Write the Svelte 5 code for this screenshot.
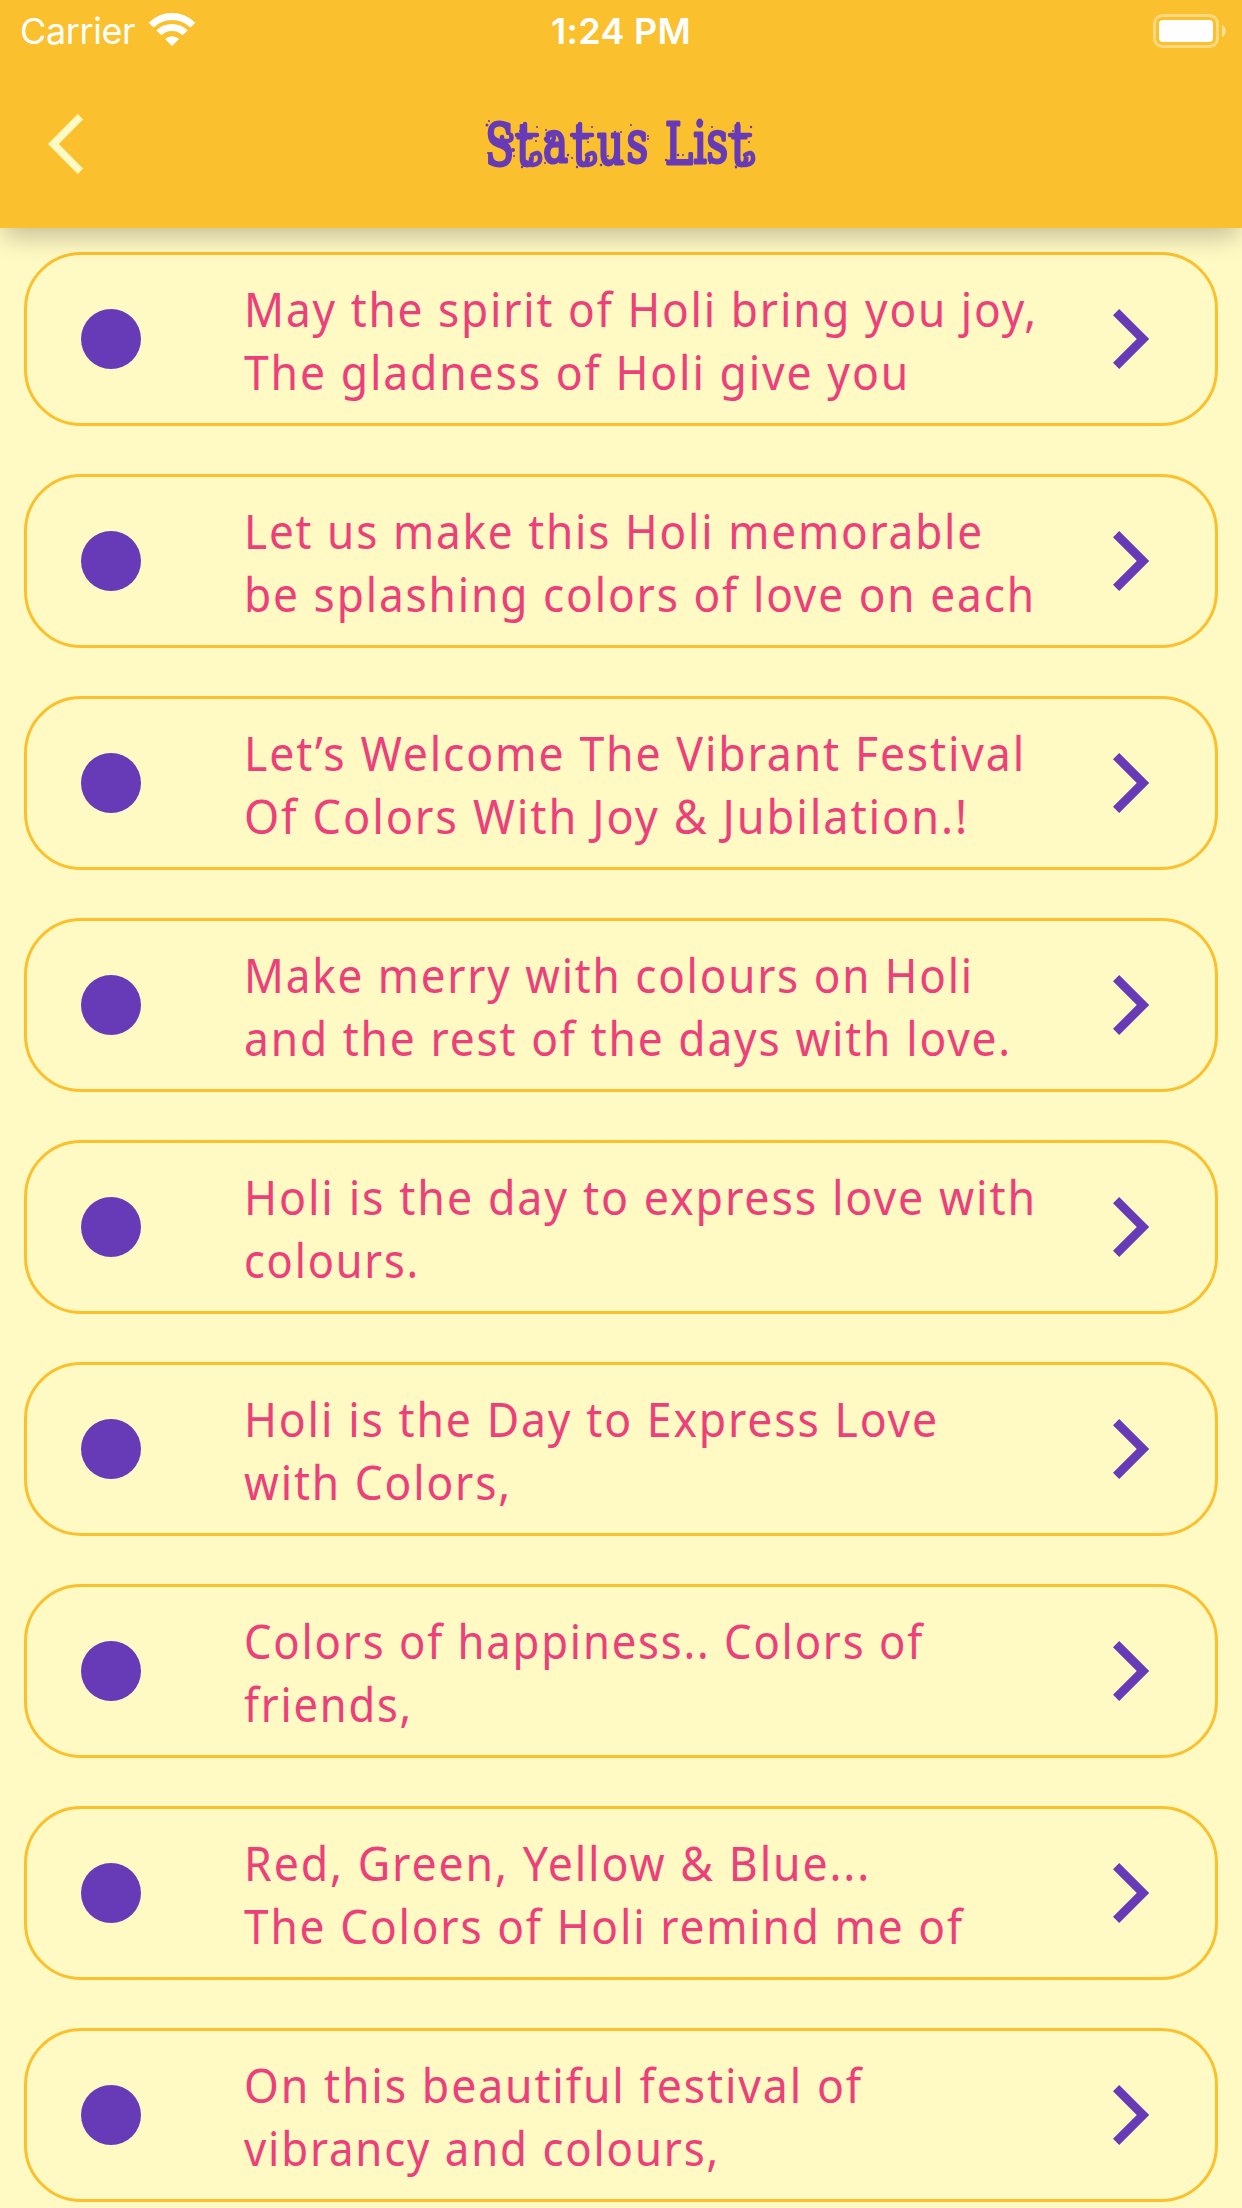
<script>
  // Each line carries the advance width it is fitted to.
  const statuses = [
    [['May the spirit of Holi bring you joy,', 794], ['The gladness of Holi give you', 666]],
    [['Let us make this Holi memorable', 740], ['be splashing colors of love on each', 792]],
    [['Let’s Welcome The Vibrant Festival', 782], ['Of Colors With Joy & Jubilation.!', 725]],
    [['Make merry with colours on Holi', 730], ['and the rest of the days with love.', 768]],
    [['Holi is the day to express love with', 793], ['colours.', 176]],
    [['Holi is the Day to Express Love', 695], ['with Colors,', 268]],
    [['Colors of happiness.. Colors of', 680], ['friends,', 169]],
    [['Red, Green, Yellow & Blue...', 627], ['The Colors of Holi remind me of', 720]],
    [['On this beautiful festival of', 619], ['vibrancy and colours,', 476]]
  ];

  const specks = [
    [1, 6, 1.5], [3, 2, 1], [2, 34, 1], [5, 39, 1], [27, 31, 2], [28, 37, 1], [34, 12, 1],
    [51, 8, 1], [50, 22, 1], [36, 48, 1.2], [60, 11, 1], [59, 44, 1], [82, 36, 1.2], [86, 39, 1],
    [106, 8, 1], [102, 23, 1], [91, 48, 1.2], [115, 46, 1.3], [122, 37, 1], [129, 13, 1.2],
    [135, 13, 1], [138, 45, 1], [145, 6, 1], [162, 17, 1], [162, 20, 1], [180, 41, 1.2],
    [192, 36, 1.3], [197, 36, 1], [216, 3, 1.3], [218, 43, 1], [224, 44, 1.2], [226, 8, 1],
    [247, 12, 1], [265, 8, 1.2], [263, 23, 1], [250, 48, 1.4]
  ];
  // Swirled foot, crossbar and raised stem of each t, then the curl on S and a.
  const curls = [
    'M40 43q1 3 7 3 8-1 7-8t-8-2M31 16h20M39 20V5', 'M95 43q1 3 7 3 8-1 7-8t-8-2M86 16h20M94 20V5',
    'M253 43q1 3 7 3 8-1 7-8t-8-2M244 16h20M252 20V5', 'M25 16q2 6-4 6t-5-4', 'M60 20a4 4 0 1 0 5-5'
  ];
</script>

<div class="screen">
  <header>
    <div class="statusbar">
      <div class="network">
        <span class="carrier">Carrier</span>
        <svg class="wifi" width="46" height="33" viewBox="0 0 46 33">
          <path d="M2.1 12.1a29.5 29.5 0 0 1 41.8 0M9.9 19.9a18.5 18.5 0 0 1 26.2 0" fill="none" stroke="#fff" stroke-width="7" />
          <path d="M23 33l-7-7a10 10 0 0 1 14 0z" fill="#fff" />
        </svg>
      </div>
      <span class="time">1:24 PM</span>
      <svg class="battery" width="74" height="34" viewBox="0 0 74 34">
        <rect x="1.5" y="1.5" width="63" height="31" rx="8" fill="none" stroke="#fff" stroke-opacity=".4" stroke-width="3" />
        <rect x="6" y="6" width="54" height="22" rx="4" fill="#fff" />
        <path d="M69 11c5 2 5 10 0 12z" fill="#fff" fill-opacity=".5" />
      </svg>
    </div>
    <div class="toolbar">
      <svg class="back" width="35" height="60" viewBox="0 0 35 60">
        <path d="M35 5.5 29.8 0 0 30l29.8 30 5.2-5.5L10.8 30z" />
      </svg>
      <svg class="title" width="270" height="50" viewBox="0 0 270 50">
        <text transform="scale(.74 1)" x="-1 41 77 117 150 190 218 242 280 298 331" y="46 46 43 46 45 43 46 45 44 43 46">Status List</text>
        {#each curls as d}<path {d} />{/each}
        {#each specks as [cx, cy, r]}<circle {cx} {cy} {r} />{/each}
      </svg>
    </div>
  </header>

  <main>
    {#each statuses as lines}
      <article>
        <i class="dot"></i>
        <div class="message">
          {#each lines as [text, width]}
            <svg width="820" height="63">
              <text x="1" y="51" textLength={width} lengthAdjust="spacingAndGlyphs">{text}</text>
            </svg>
          {/each}
        </div>
        <svg class="next" width="36" height="60" viewBox="0 0 36 60">
          <path d="M0 6.2 23.8 30 0 53.8 6.2 60l30-30L6.2 0z" />
        </svg>
      </article>
    {/each}
  </main>
</div>

<style>
  :global(body) { margin: 0; background: #fff9c4; }
  .screen { width: 1242px; height: 2208px; overflow: hidden; background: #fff9c4; }
  header {
    position: relative;
    z-index: 1;
    height: 228px;
    background: #fbc02d;
    box-shadow: 0 12px 24px -4px rgba(0, 0, 0, .24);
  }
  .statusbar {
    display: grid;
    grid-template-columns: 1fr auto 1fr;
    align-items: center;
    height: 60px;
    padding: 0 15px 0 20px;
    color: #fff;
    font: 400 36px/62px Inter, sans-serif;
  }
  .network { display: flex; gap: 13px; }
  .carrier { width: 116px; letter-spacing: -.4px; white-space: nowrap; }
  .wifi { margin-top: 13px; overflow: visible; }
  .time { font-weight: 600; letter-spacing: .3px; margin-right: 5px; }
  .battery { justify-self: end; }
  .toolbar {
    display: grid;
    grid-template-columns: 1fr auto 1fr;
    align-items: center;
    height: 168px;
    padding: 0 48px;
  }
  .back { fill: #fff9c4; }
  .title { overflow: visible; fill: #673ab7; stroke: #673ab7; }
  .title text { font: 400 57px "DejaVu Serif", serif; stroke-width: 3; stroke-linejoin: round; }
  .title path { fill: none; stroke-width: 4.5; stroke-linecap: round; }
  .title circle { stroke: none; }
  main { display: flex; flex-direction: column; gap: 48px; padding: 24px; }
  article {
    display: flex;
    flex: none;
    align-items: center;
    box-sizing: border-box;
    height: 174px;
    padding: 0 66px 0 54px;
    border: 3px solid #fbc02d;
    border-radius: 57px;
  }
  .dot { width: 60px; height: 60px; border-radius: 50%; background: #673ab7; }
  .message { display: flex; flex-direction: column; margin-left: 102px; }
  .message svg { display: block; overflow: visible; }
  .message text { font: 400 48px "Noto Sans", sans-serif; letter-spacing: 2px; word-spacing: .5px; fill: #ec407a; }
  .next { margin-left: auto; fill: #673ab7; overflow: visible; }
</style>
